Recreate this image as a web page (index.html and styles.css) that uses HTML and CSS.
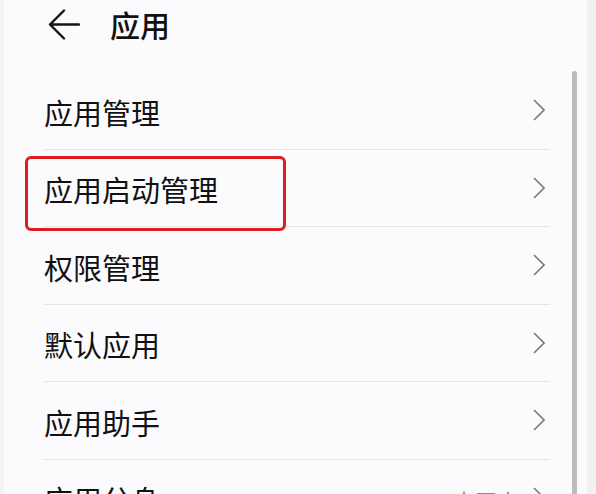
FILE: index.html
```html
<!DOCTYPE html>
<html lang="zh-CN">
<head>
<meta charset="utf-8">
<link rel="stylesheet" href="styles.css">
</head>
<body>
<div class="screen">
  <div class="edge-left"></div>
  <div class="page">
    <header class="header">
      <svg class="back" width="32" height="32" viewBox="0 0 32 32"><path d="M16 1.5 L2 15.5 L16 29.5 M2 15.5 H31" fill="none" stroke="#151515" stroke-width="2.4" stroke-linecap="round" stroke-linejoin="round"/></svg>
      <h1 class="title">应用</h1>
    </header>
    <ul class="list">
      <li class="row"><span class="label">应用管理</span><svg class="chev" width="12" height="22" viewBox="0 0 12 22"><path d="M1 1 L11 11 L1 21" fill="none" stroke="#7a7a7a" stroke-width="1.6"/></svg></li>
      <li class="row"><span class="label">应用启动管理</span><svg class="chev" width="12" height="22" viewBox="0 0 12 22"><path d="M1 1 L11 11 L1 21" fill="none" stroke="#7a7a7a" stroke-width="1.6"/></svg></li>
      <li class="row"><span class="label">权限管理</span><svg class="chev" width="12" height="22" viewBox="0 0 12 22"><path d="M1 1 L11 11 L1 21" fill="none" stroke="#7a7a7a" stroke-width="1.6"/></svg></li>
      <li class="row"><span class="label">默认应用</span><svg class="chev" width="12" height="22" viewBox="0 0 12 22"><path d="M1 1 L11 11 L1 21" fill="none" stroke="#7a7a7a" stroke-width="1.6"/></svg></li>
      <li class="row"><span class="label">应用助手</span><svg class="chev" width="12" height="22" viewBox="0 0 12 22"><path d="M1 1 L11 11 L1 21" fill="none" stroke="#7a7a7a" stroke-width="1.6"/></svg></li>
      <li class="row"><span class="label">应用分身</span><span class="value">未开启</span><svg class="chev" width="12" height="22" viewBox="0 0 12 22"><path d="M1 1 L11 11 L1 21" fill="none" stroke="#7a7a7a" stroke-width="1.6"/></svg></li>
    </ul>
    <div class="highlight"></div>
    <div class="scrollbar"></div>
  </div>
  <div class="edge-right"></div>
</div>
</body>
</html>
```
FILE: styles.css
```css
html, body {
  margin: 0;
  padding: 0;
  width: 596px;
  height: 494px;
  overflow: hidden;
  background: #f4f4f6;
  font-family: "Noto Sans CJK SC", "Noto Sans", sans-serif;
  color: #111;
}
.screen {
  display: flex;
  height: 494px;
}
.edge-left {
  width: 4px;
  background: #f3f3f5;
}
.edge-right {
  width: 9px;
  background: #f1f1f3;
}
.page {
  position: relative;
  flex: 1;
  background: #fbfbfd;
  overflow: hidden;
}
.header {
  height: 72px;
  display: flex;
  align-items: flex-start;
}
.back {
  margin-left: 44px;
  margin-top: 9px;
}
.title {
  margin: 0 0 0 30px;
  padding-top: 3px;
  font-size: 30px;
  font-weight: 500;
  line-height: 42px;
}
.list {
  list-style: none;
  margin: 0;
  padding: 0;
}
.row {
  display: flex;
  align-items: center;
  height: 76.5px;
  margin: 0 37px 0 40px;
  border-bottom: 1px solid #e4e4e6;
}
.label {
  flex: 1;
  font-size: 29px;
  line-height: 34px;
  padding-top: 3px;
}
.value {
  font-size: 22px;
  color: #8a8a8a;
  margin-right: 14px;
  padding-top: 4px;
}
.chev {
  margin-right: 5px;
}
.highlight {
  position: absolute;
  left: 21px;
  top: 156px;
  width: 255px;
  height: 69px;
  border: 3px solid #dc1f1c;
  border-radius: 6px;
}
.scrollbar {
  position: absolute;
  left: 568px;
  top: 71px;
  width: 5px;
  height: 430px;
  background: #bdbdbd;
  border-radius: 2px;
}
```
